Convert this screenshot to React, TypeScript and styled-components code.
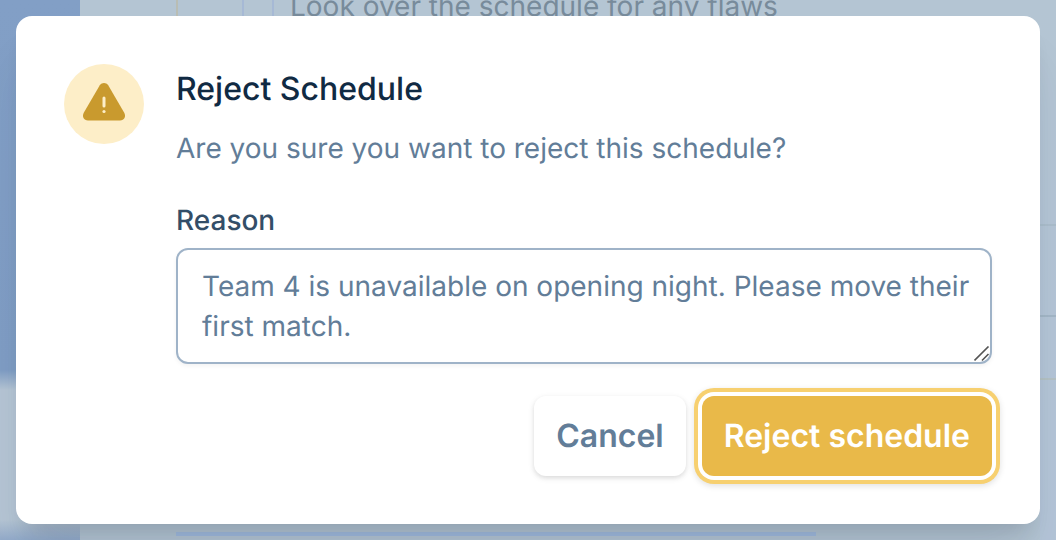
import React from "react";
import styled, { createGlobalStyle } from "styled-components";

const GlobalStyle = createGlobalStyle`
  *, *::before, *::after { box-sizing: border-box; }
  html, body, #root { height: 100%; }
  body {
    margin: 0;
    overflow: hidden;
    font-family: Inter, "Liberation Sans", sans-serif;
    text-rendering: geometricPrecision;
    -webkit-font-smoothing: antialiased;
    background: #b4c5d3;
  }
  h2, p { margin: 0; }
`;

const Screen = styled.div`
  position: relative;
  min-height: 100%;
  display: grid;
`;

const Page = styled.div`
  grid-area: 1 / 1;
  display: grid;
  grid-template-columns: 80px 1fr 16px;
`;

const Rail = styled.div`
  background: linear-gradient(#829fc6 0, #7f9dc4 370px, #b5c5d4 390px, #b5c5d4 520px, #93abca 540px);
`;

const Main = styled.div`
  display: flex;
  flex-direction: column;
  justify-content: space-between;
  padding: 0 96px 4px;
`;

const Step = styled.div`
  display: flex;
  height: 24px;
`;

const Guide = styled.span<{ $width: number; $color: string }>`
  flex: none;
  width: ${(p) => p.$width}px;
  border-left: 2px solid ${(p) => p.$color};
`;

const StepText = styled.p`
  font-size: 28px;
  line-height: 12px;
  color: #788b9b;
  white-space: nowrap;
`;

const Progress = styled.div`
  width: 640px;
  height: 4px;
  background: #a2bbde;
`;

const Edge = styled.div`
  display: flex;
  flex-direction: column;
  background: linear-gradient(#b4c5d3, #b4c5d8);
`;

const EdgeCell = styled.div<{ $height: number; $line: string }>`
  height: ${(p) => p.$height}px;
  border-bottom: 2px solid ${(p) => p.$line};
`;

const Overlay = styled.div`
  grid-area: 1 / 1;
  position: relative;
  padding: 16px;
`;

const Dialog = styled.div`
  display: flex;
  flex-direction: column;
  gap: 32px;
  padding: 48px;
  border-radius: 16px;
  background: #fff;
  box-shadow: 0 40px 50px -10px rgba(16, 42, 67, 0.1), 0 16px 20px -10px rgba(0, 0, 0, 0.12);
`;

const Body = styled.div`
  display: flex;
  align-items: flex-start;
  gap: 32px;
`;

const Badge = styled.div`
  flex: none;
  display: flex;
  align-items: center;
  justify-content: center;
  width: 80px;
  height: 80px;
  border-radius: 50%;
  background: #fdeec8;
`;

const Content = styled.div`
  flex: 1;
  min-width: 0;
  display: flex;
  flex-direction: column;
`;

const Title = styled.h2`
  font-size: 32px;
  line-height: 50px;
  font-weight: 500;
  color: #102a43;
`;

const Description = styled.p`
  margin-top: 14px;
  font-size: 28px;
  line-height: 40px;
  color: #627d98;
`;

const Label = styled.label`
  margin: 32px 0 8px;
  font-size: 28px;
  line-height: 40px;
  font-weight: 500;
  color: #334e68;
`;

const ReasonField = styled.div`
  position: relative;
`;

const Reason = styled.textarea`
  display: block;
  width: 100%;
  padding: 16px 12px 16px 24px;
  border: 2px solid #9fb3c8;
  border-radius: 12px;
  outline: none;
  overflow: hidden;
  background: #fff;
  color: #627d98;
  font: 400 28px/40px Inter, "Liberation Sans", sans-serif;
  text-rendering: geometricPrecision;
  box-shadow: 0 2px 4px rgba(0, 0, 0, 0.05);
  resize: none;
`;

const Grip = styled.svg`
  position: absolute;
  right: 2px;
  bottom: 2px;
  pointer-events: none;
`;

const Actions = styled.div`
  display: flex;
  justify-content: flex-end;
  gap: 16px;
`;

const Button = styled.button<{ $primary?: boolean }>`
  padding: 16px 22px;
  border: 0;
  border-radius: 12px;
  font: 600 32px/48px Inter, "Liberation Sans", sans-serif;
  text-rendering: geometricPrecision;
  color: ${(p) => (p.$primary ? "#fff" : "#627d98")};
  background: ${(p) => (p.$primary ? "#e9b949" : "#fff")};
  box-shadow: ${(p) =>
    p.$primary
      ? "0 0 0 4px #fff, 0 0 0 8px #f7d070, 0 2px 6px 8px rgba(0, 0, 0, 0.12)"
      : "0 2px 6px rgba(0, 0, 0, 0.1), 0 2px 4px rgba(0, 0, 0, 0.06)"};
`;

function WarningIcon() {
  return (
    <svg width="48" height="48" viewBox="0 0 48 48" aria-hidden="true">
      <path
        d="M19.8 5.3C21.8 2.1 26.2 2.1 28.2 5.3L44.1 32.5C46.4 36.5 44.2 40.5 40 40.5H8C3.8 40.5 1.6 36.5 3.9 32.5Z"
        fill="#c99a2e"
      />
      <path d="M24 18V26" stroke="#fdeec8" strokeWidth="3" strokeLinecap="round" />
      <circle cx="24" cy="31.5" r="1.6" fill="#fdeec8" />
    </svg>
  );
}

export default function App() {
  return (
    <>
      <GlobalStyle />
      <Screen>
        <Page>
          <Rail />
          <Main>
            <Step>
              <Guide $width={66} $color="#b9bdb4" />
              <Guide $width={30} $color="#a6b9d5" />
              <Guide $width={18} $color="#a6b9d5" />
              <StepText>Look over the schedule for any flaws</StepText>
            </Step>
            <Progress />
          </Main>
          <Edge>
            <EdgeCell $height={226} $line="#abbdcb" />
            <EdgeCell $height={91} $line="#a3b6c6" />
            <EdgeCell $height={63} $line="#b4c1c3" />
          </Edge>
        </Page>
        <Overlay>
          <Dialog role="dialog" aria-modal="true" aria-labelledby="dialog-title">
            <Body>
              <Badge>
                <WarningIcon />
              </Badge>
              <Content>
                <Title id="dialog-title">Reject Schedule</Title>
                <Description>Are you sure you want to reject this schedule?</Description>
                <Label htmlFor="reason">Reason</Label>
                <ReasonField>
                  <Reason
                    id="reason"
                    rows={2}
                    defaultValue="Team 4 is unavailable on opening night. Please move their first match."
                  />
                  <Grip width="16" height="16" viewBox="0 0 16 16" aria-hidden="true">
                    <path d="M0.5 14.5L14.5 0.5M8 14.5L14.5 8" stroke="#555" strokeWidth="1.6" fill="none" />
                  </Grip>
                </ReasonField>
              </Content>
            </Body>
            <Actions>
              <Button type="button">Cancel</Button>
              <Button type="button" $primary>
                Reject schedule
              </Button>
            </Actions>
          </Dialog>
        </Overlay>
      </Screen>
    </>
  );
}
